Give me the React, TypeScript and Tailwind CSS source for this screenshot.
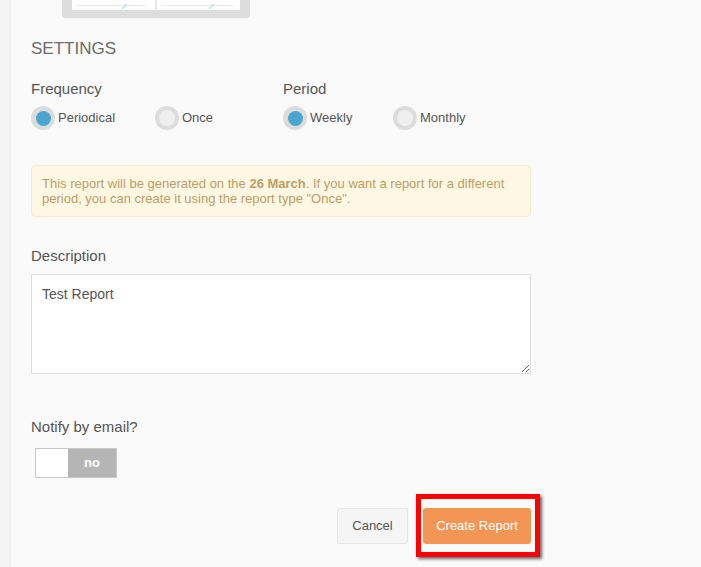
import { useState } from "react";

function Radio({ label, checked, onClick }: { label: string; checked: boolean; onClick: () => void }) {
  return (
    <button onClick={onClick} className="flex items-center gap-[3px] text-[13px] text-[#555]">
      <span className="flex h-[24px] w-[24px] items-center justify-center rounded-full bg-[#dcdcdc]">
        <span
          className={
            checked
              ? "h-[15px] w-[15px] rounded-full bg-[#4aa6cf]"
              : "h-[16px] w-[16px] rounded-full bg-[#efefef]"
          }
        />
      </span>
      <span>{label}</span>
    </button>
  );
}

export default function App() {
  const [freq, setFreq] = useState("periodical");
  const [period, setPeriod] = useState("weekly");
  const [notify, setNotify] = useState(false);

  return (
    <div className="flex h-[567px] w-[701px] overflow-hidden bg-[#fafafa] font-['Liberation_Sans',Arial,sans-serif]">
      <div className="w-[11px] shrink-0 bg-[#f3f3f3]" />
      <div className="flex w-[520px] flex-col pl-[20px]">
        {/* chart thumbnail peeking from above */}
        <div className="ml-[31px] h-[18px] w-[188px] rounded-b-[4px] bg-[#dddddd] px-[10px]">
          <div className="flex h-[10px] bg-white">
            <div className="relative flex-1 border-r-2 border-[#e8e8e8]">
              <div className="absolute left-[4px] right-[8px] top-[5px] h-px bg-[#eaeaea]" />
              <div className="absolute left-[52px] top-[3px] h-[7px] w-px rotate-45 bg-[#9fdbe8]" />
            </div>
            <div className="relative flex-1">
              <div className="absolute left-[4px] right-[6px] top-[5px] h-px bg-[#eaeaea]" />
              <div className="absolute left-[54px] top-[3px] h-[7px] w-px rotate-45 bg-[#9fdbe8]" />
            </div>
          </div>
        </div>

        <h2 className="mt-[21px] text-[17px] leading-[20px] text-[#6b6b6b]">SETTINGS</h2>

        <div className="mt-[21px] flex">
          <div className="w-[252px]">
            <div className="text-[15px] leading-[18px] text-[#555]">Frequency</div>
            <div className="mt-[8px] flex gap-[16px]">
              <div className="w-[108px]">
                <Radio label="Periodical" checked={freq === "periodical"} onClick={() => setFreq("periodical")} />
              </div>
              <Radio label="Once" checked={freq === "once"} onClick={() => setFreq("once")} />
            </div>
          </div>
          <div>
            <div className="text-[15px] leading-[18px] text-[#555]">Period</div>
            <div className="mt-[8px] flex gap-[16px]">
              <div className="w-[94px]">
                <Radio label="Weekly" checked={period === "weekly"} onClick={() => setPeriod("weekly")} />
              </div>
              <Radio label="Monthly" checked={period === "monthly"} onClick={() => setPeriod("monthly")} />
            </div>
          </div>
        </div>

        <div className="mt-[35px] rounded-[4px] border border-[#f8ecc9] bg-[#fcf8e3] px-[10px] py-[10px] text-[13px] leading-[15px] text-[#c29c63]">
          This report will be generated on the <b>26 March</b>. If you want a report for a different period, you can
          create it using the report type "Once".
        </div>

        <label className="mt-[30px] text-[15px] leading-[18px] text-[#555]">Description</label>
        <textarea
          defaultValue="Test Report"
          className="mt-[9px] h-[100px] w-[500px] border border-[#dcdcdc] bg-white px-[10px] py-[10px] text-[14px] leading-[18px] text-[#555] outline-none"
        />

        <div className="mt-[44px] text-[15px] leading-[18px] text-[#555]">Notify by email?</div>
        <button
          onClick={() => setNotify(!notify)}
          className="ml-[4px] mt-[12px] flex h-[30px] w-[82px] border border-[#c8c8c8]"
        >
          <span className="h-full w-[32px] bg-white" />
          <span className="flex h-full flex-1 items-center justify-center bg-[#b5b5b5] text-[13px] font-bold text-white">
            {notify ? "yes" : "no"}
          </span>
        </button>

        <div className="mt-[30px] flex items-center justify-end gap-[15px]">
          <button className="h-[36px] w-[71px] rounded-[3px] border border-[#e6e6e6] bg-[#f5f5f5] text-[13px] text-[#555]">
            Cancel
          </button>
          <div className="relative">
            <button className="h-[36px] w-[108px] rounded-[3px] bg-[#f39655] text-[13px] text-white">
              Create Report
            </button>
            <div className="pointer-events-none absolute -bottom-[13px] -left-[7px] -right-[9px] -top-[14px] border-[5px] border-[#ff0000] shadow-[2px_2px_3px_rgba(0,0,0,0.6)]" />
          </div>
        </div>
      </div>
    </div>
  );
}
